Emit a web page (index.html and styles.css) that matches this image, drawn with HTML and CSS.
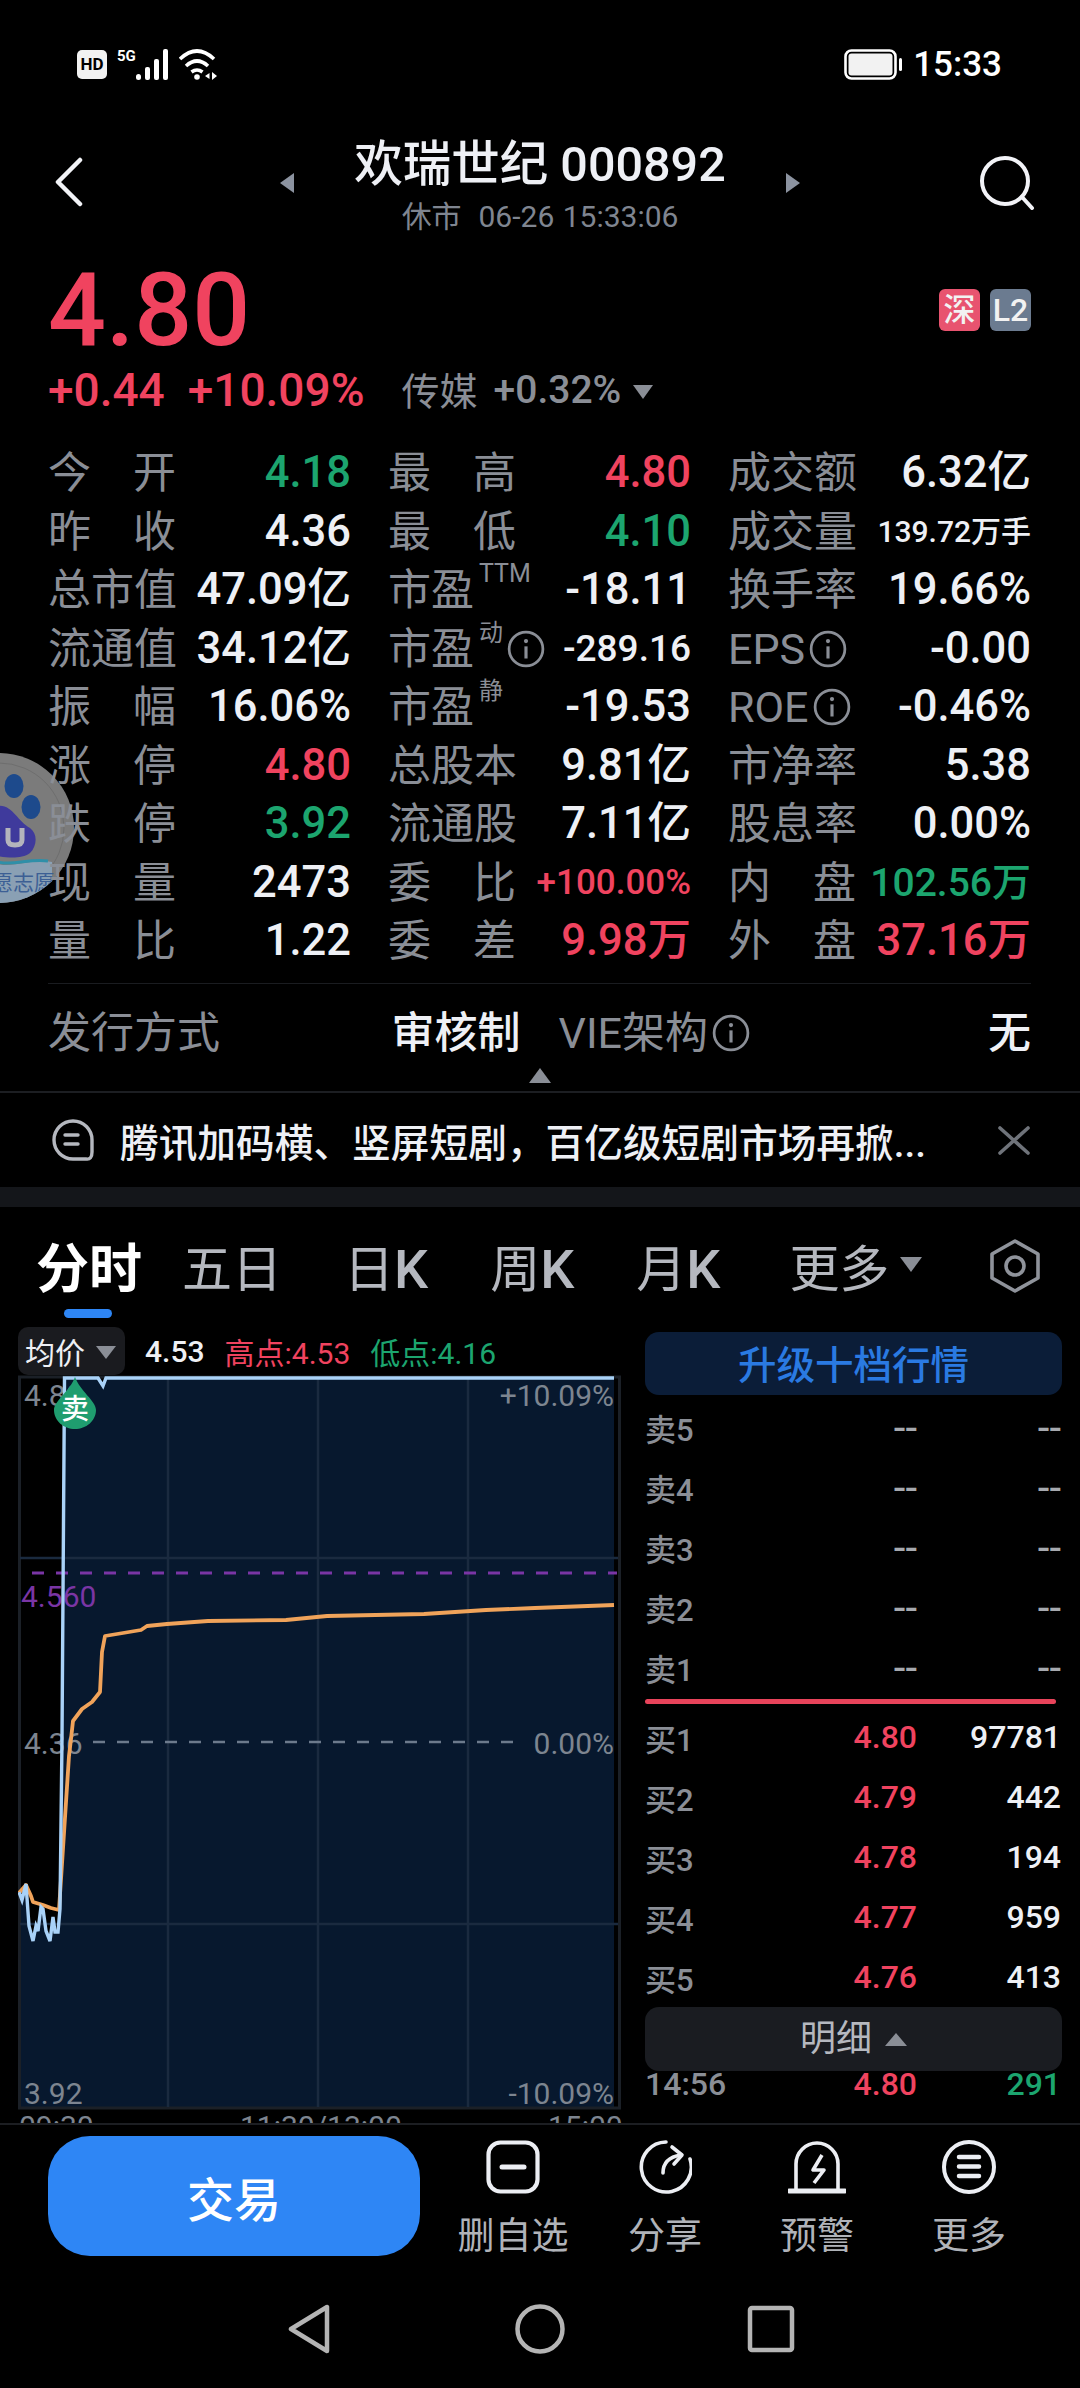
FILE: index.html
```html
<!DOCTYPE html>
<html lang="zh-CN">
<head>
  <meta charset="UTF-8" />
  <meta name="viewport" content="width=device-width, initial-scale=1.0" />
  <title>欢瑞世纪 000892</title>
  <link rel="stylesheet" href="styles.css">
</head>
<body>
  <svg class="defs" width="0" height="0">
    <symbol id="icon-info" viewBox="0 0 36 36">
      <circle cx="18" cy="18" r="16" fill="none" stroke="currentColor" stroke-width="2.6"/>
      <circle cx="18" cy="10.5" r="2" fill="currentColor"/>
      <path d="M18 15.5V27" stroke="currentColor" stroke-width="3" fill="none"/>
    </symbol>
  </svg>

  <!-- Floating helper bubble docked on the left edge -->
  <svg class="bubble" width="76" height="152" viewBox="0 0 76 152">
    <clipPath id="bubble-clip"><circle cx="-1" cy="76" r="75"/></clipPath>
    <circle cx="-1" cy="76" r="75" fill="#7b7b7b"/>
    <circle cx="-1" cy="76" r="65" fill="none" stroke="#6e6e6e" stroke-width="1"/>
    <g clip-path="url(#bubble-clip)">
      <ellipse cx="14" cy="34" rx="9.500" ry="12" fill="#1d4a8c"/>
      <ellipse cx="31" cy="55" rx="9.500" ry="12" fill="#1d4a8c"/>
      <path d="M-2 54C12 52 18 70 30 76C38 82 37 94 30 101C22 107 8 106 -2 104Z" fill="#3f3a9c"/>
      <path d="M8 76V88Q8 93 15 93Q22 93 22 88V76" fill="none" stroke="#b4b4bc" stroke-width="5"/>
      <path d="M-2 112C14 116 34 106 52 110V152H-2Z" fill="#8aa0b4"/>
      <path d="M-2 110C14 114 30 106 48 109" fill="none" stroke="#2f8fa8" stroke-width="3"/>
      <text class="bubble-text" x="-8" y="138">愿志愿</text>
    </g>
  </svg>

  <div class="status-bar">
    <div class="status-left">
      <span class="hd-badge">HD</span>
      <span class="net-label">5G</span>
      <svg class="signal" width="33" height="31" viewBox="0 0 33 31" fill="#fff">
        <rect x="0" y="25" width="5" height="6" rx="2.500"/>
        <rect x="9" y="18" width="5" height="13" rx="2"/>
        <rect x="18" y="10" width="5" height="21" rx="2"/>
        <rect x="27" y="0" width="5" height="31" rx="2"/>
      </svg>
      <svg class="wifi" width="38" height="31" viewBox="0 0 38 31" fill="none" stroke="#fff" stroke-width="3.600">
        <path d="M1 10Q18 -6 35 10"/>
        <path d="M7 17Q18 7 29 17"/>
        <path d="M12.500 23Q18 19 23.500 23"/>
        <circle cx="18" cy="28" r="2.800" fill="#fff" stroke="none"/>
        <path d="M30.500 24L26 27L30.500 30ZM33 23V31L38 27Z" fill="#fff" stroke="none"/>
      </svg>
    </div>
    <div class="status-right">
      <svg width="58" height="31" viewBox="0 0 58 31">
        <rect x="1.500" y="1.500" width="50" height="28" rx="6" fill="none" stroke="#fff" stroke-width="2.600"/>
        <rect x="4.500" y="4.500" width="44" height="22" rx="3" fill="#f2f2f2"/>
        <rect x="55" y="9" width="3" height="13" rx="1.500" fill="#fff"/>
      </svg>
      <span class="clock">15:33</span>
    </div>
  </div>

  <header class="nav-head">
    <svg class="back-icon" width="28" height="50" viewBox="0 0 28 50" fill="none" stroke="#f2f3f7" stroke-width="4.500" stroke-linecap="round" stroke-linejoin="round">
      <path d="M25 3L3 25L25 47"/>
    </svg>
    <div class="nav-center">
      <span class="tri tri-left"></span>
      <div class="nav-title">
        <h1>欢瑞世纪 000892</h1>
        <p>休市&nbsp; 06-26 15:33:06</p>
      </div>
      <span class="tri tri-right"></span>
    </div>
    <svg class="search-icon" width="56" height="54" viewBox="0 0 56 54" fill="none" stroke="#f2f3f7" stroke-width="4">
      <circle cx="26" cy="25" r="23"/>
      <path d="M43 41L53 52" stroke-linecap="round"/>
    </svg>
  </header>

  <section class="quote">
    <div class="quote-top">
      <div class="price">4.80</div>
      <div class="tags">
        <span class="tag tag-market">深</span>
        <span class="tag tag-level">L2</span>
      </div>
    </div>
    <div class="quote-change">
      <span class="up">+0.44</span>
      <span class="up">+10.09%</span>
      <span class="sector">传媒</span>
      <span class="sector-num">+0.32%</span>
      <span class="caret-down"></span>
    </div>
  </section>

  <section class="stats">
    <div class="stat"><span class="stat-label">今开</span><span class="stat-value down">4.18</span></div>
    <div class="stat"><span class="stat-label">最高</span><span class="stat-value up">4.80</span></div>
    <div class="stat"><span class="stat-label">成交额</span><span class="stat-value">6.32亿</span></div>

    <div class="stat"><span class="stat-label">昨收</span><span class="stat-value">4.36</span></div>
    <div class="stat"><span class="stat-label">最低</span><span class="stat-value down">4.10</span></div>
    <div class="stat"><span class="stat-label">成交量</span><span class="stat-value size-vol">139.72万手</span></div>

    <div class="stat"><span class="stat-label">总市值</span><span class="stat-value">47.09亿</span></div>
    <div class="stat"><span class="stat-label-flex">市盈<sup class="stat-sup sup-ttm">TTM</sup></span><span class="stat-value">-18.11</span></div>
    <div class="stat"><span class="stat-label">换手率</span><span class="stat-value">19.66%</span></div>

    <div class="stat"><span class="stat-label">流通值</span><span class="stat-value">34.12亿</span></div>
    <div class="stat"><span class="stat-label-flex">市盈<sup class="stat-sup">动</sup><svg class="info"><use href="#icon-info"/></svg></span><span class="stat-value size-pe">-289.16</span></div>
    <div class="stat"><span class="stat-label-flex">EPS<svg class="info"><use href="#icon-info"/></svg></span><span class="stat-value">-0.00</span></div>

    <div class="stat"><span class="stat-label">振幅</span><span class="stat-value">16.06%</span></div>
    <div class="stat"><span class="stat-label-flex">市盈<sup class="stat-sup">静</sup></span><span class="stat-value">-19.53</span></div>
    <div class="stat"><span class="stat-label-flex">ROE<svg class="info"><use href="#icon-info"/></svg></span><span class="stat-value">-0.46%</span></div>

    <div class="stat"><span class="stat-label">涨停</span><span class="stat-value up">4.80</span></div>
    <div class="stat"><span class="stat-label">总股本</span><span class="stat-value">9.81亿</span></div>
    <div class="stat"><span class="stat-label">市净率</span><span class="stat-value">5.38</span></div>

    <div class="stat"><span class="stat-label">跌停</span><span class="stat-value down">3.92</span></div>
    <div class="stat"><span class="stat-label">流通股</span><span class="stat-value">7.11亿</span></div>
    <div class="stat"><span class="stat-label">股息率</span><span class="stat-value">0.00%</span></div>

    <div class="stat"><span class="stat-label">现量</span><span class="stat-value">2473</span></div>
    <div class="stat"><span class="stat-label">委比</span><span class="stat-value up size-ratio">+100.00%</span></div>
    <div class="stat"><span class="stat-label">内盘</span><span class="stat-value down size-inner">102.56万</span></div>

    <div class="stat"><span class="stat-label">量比</span><span class="stat-value">1.22</span></div>
    <div class="stat"><span class="stat-label">委差</span><span class="stat-value up">9.98万</span></div>
    <div class="stat"><span class="stat-label">外盘</span><span class="stat-value up">37.16万</span></div>
  </section>

  <section class="issue">
    <div class="issue-row">
      <div class="issue-cell"><span class="issue-label">发行方式</span><span class="issue-value">审核制</span></div>
      <div class="issue-cell"><span class="issue-label">VIE架构<svg class="info"><use href="#icon-info"/></svg></span><span class="issue-value">无</span></div>
    </div>
    <span class="caret-up"></span>
  </section>

  <div class="news">
    <svg width="42" height="43" viewBox="0 0 42 43" fill="none" stroke="#b5b8bf" stroke-width="3.400" stroke-linecap="round">
      <path d="M21 40A19 19 0 1 1 40 21V33Q40 41 34 40Z"/>
      <path d="M13 16H26M13 25H26"/>
    </svg>
    <p class="news-text">腾讯加码横、竖屏短剧，百亿级短剧市场再掀...</p>
    <svg width="32" height="29" viewBox="0 0 32 29" fill="none" stroke="#6f737a" stroke-width="3.600" stroke-linecap="round">
      <path d="M2 2L30 27M30 2L2 27"/>
    </svg>
  </div>

  <div class="band"></div>

  <nav class="tabs">
    <span class="tab active">分时</span>
    <span class="tab">五日</span>
    <span class="tab">日<b class="tab-k">K</b></span>
    <span class="tab">周<b class="tab-k">K</b></span>
    <span class="tab">月<b class="tab-k">K</b></span>
    <span class="tab tab-more">更多<i class="tab-caret"></i></span>
    <svg class="tab-gear" width="50" height="54" viewBox="0 0 50 54" fill="none" stroke="#8f939b" stroke-width="3.600" stroke-linejoin="round">
      <path d="M25 2L48 15V39L25 52L2 39V15Z"/>
      <circle cx="25" cy="27" r="9"/>
    </svg>
  </nav>

  <section class="market">
    <div class="chart-col">
      <div class="chart-bar">
        <div class="avg-select">均价<i class="avg-caret"></i></div>
        <span class="avg-num">4.53</span>
        <span class="up">高点:4.53</span>
        <span class="down">低点:4.16</span>
      </div>
      <!-- Intraday chart, drawn on a free canvas of 612 x 748 -->
      <svg class="chart" width="612" height="748" viewBox="18 1376 612 748">
        <path class="area" d="M19 1893L22 1901L26 1885L29 1927L33 1942L36 1927L38 1932L41 1908L43 1910L46 1932L50 1942L53 1918L55 1933L58 1933L60 1910L62 1740L64.500 1379L98 1379L103 1387L106 1379L614 1379V2108H19Z"/>
        <rect class="frame" x="19.500" y="1378" width="600" height="731"/>
        <path class="grid" d="M168 1379V2108M318 1379V2108M468 1379V2108M20 1559H618M20 1925H618"/>
        <path class="zero-line" d="M93 1743H525"/>
        <path class="limit-line" d="M32 1574H617"/>
        <text class="axis-text" x="24" y="1407">4.80</text>
        <text class="axis-text" x="24" y="1755">4.36</text>
        <text class="axis-text" x="24" y="2105">3.92</text>
        <text class="axis-text axis-end" x="614" y="1407">+10.09%</text>
        <text class="axis-text axis-end" x="614" y="1755">0.00%</text>
        <text class="axis-text axis-end" x="614" y="2105">-10.09%</text>
        <text class="limit-text" x="21" y="1608">4.560</text>
        <path class="avg-line" d="M19 1894L26 1886L31 1897L33 1903L43 1906L51 1909L59 1911L69 1757L71 1740L73 1722L82 1710L92 1703L100 1693L102 1653L105 1637L141 1631L147 1627L167 1625L208 1622L286 1621L327 1617L424 1615L486 1611L535 1609L614 1606"/>
        <path class="price-line" d="M19 1893L22 1901L26 1885L29 1927L33 1942L36 1927L38 1932L41 1908L43 1910L46 1932L50 1942L53 1918L55 1933L58 1933L60 1910L62 1740L64.500 1379L98 1379L103 1387L106 1379L614 1379"/>
        <path class="sell-mark" d="M75 1378C80 1392 96 1402 96 1411C96 1422 86 1430 75 1430C64 1430 54 1422 54 1411C54 1402 70 1392 75 1378Z"/>
        <text class="sell-text" x="75" y="1420">卖</text>
        <text class="time-text" x="19" y="2138">09:30</text>
        <text class="time-text" x="240" y="2138">11:30/13:00</text>
        <text class="time-text" x="548" y="2138">15:00</text>
      </svg>
    </div>

    <div class="depth-col">
      <div class="upgrade">升级十档行情</div>
      <div class="depth-list">
        <div class="depth-row"><span class="depth-label">卖5</span><span class="depth-dash">--</span><span class="depth-dash">--</span></div>
        <div class="depth-row"><span class="depth-label">卖4</span><span class="depth-dash">--</span><span class="depth-dash">--</span></div>
        <div class="depth-row"><span class="depth-label">卖3</span><span class="depth-dash">--</span><span class="depth-dash">--</span></div>
        <div class="depth-row"><span class="depth-label">卖2</span><span class="depth-dash">--</span><span class="depth-dash">--</span></div>
        <div class="depth-row"><span class="depth-label">卖1</span><span class="depth-dash">--</span><span class="depth-dash">--</span></div>
      </div>
      <div class="depth-split"></div>
      <div class="depth-list">
        <div class="depth-row"><span class="depth-label">买1</span><span class="up">4.80</span><span>97781</span></div>
        <div class="depth-row"><span class="depth-label">买2</span><span class="up">4.79</span><span>442</span></div>
        <div class="depth-row"><span class="depth-label">买3</span><span class="up">4.78</span><span>194</span></div>
        <div class="depth-row"><span class="depth-label">买4</span><span class="up">4.77</span><span>959</span></div>
        <div class="depth-row"><span class="depth-label">买5</span><span class="up">4.76</span><span>413</span></div>
      </div>
      <div class="detail-bar">明细<i class="detail-caret"></i></div>
      <div class="depth-row trade-row"><span class="depth-label">14:56</span><span class="up">4.80</span><span class="down">291</span></div>
    </div>
  </section>

  <footer class="action-bar">
    <button class="trade-btn">交易</button>
    <div class="action">
      <svg width="54" height="54" viewBox="0 0 54 54" fill="none" stroke="#eceef3" stroke-width="4.200" stroke-linecap="round">
        <rect x="2.500" y="2.500" width="49" height="49" rx="12"/>
        <path d="M16 27H38" stroke-width="5"/>
      </svg>
      <span>删自选</span>
    </div>
    <div class="action">
      <svg width="54" height="54" viewBox="0 0 54 54" fill="none" stroke="#eceef3" stroke-width="3.600" stroke-linecap="round" stroke-linejoin="round">
        <path d="M28 2A25 25 0 1 0 52 19"/>
        <path d="M25 33C25 24 30 17 43 15"/>
        <path d="M34 7L44 15L36 24"/>
      </svg>
      <span>分享</span>
    </div>
    <div class="action">
      <svg width="58" height="54" viewBox="0 0 58 54" fill="none" stroke="#eceef3" stroke-width="3.600" stroke-linejoin="round">
        <path d="M8 50V24A21 21 0 0 1 50 24V50"/>
        <path d="M1 51H57" stroke-width="5" stroke-linecap="round"/>
        <path d="M34 15L25 30H36L26 43"/>
      </svg>
      <span>预警</span>
    </div>
    <div class="action">
      <svg width="54" height="54" viewBox="0 0 54 54" fill="none" stroke="#eceef3" stroke-width="4" stroke-linecap="round">
        <circle cx="27" cy="27" r="25"/>
        <path d="M17 17H37M17 26.500H37M17 36H37" stroke-width="4.500"/>
      </svg>
      <span>更多</span>
    </div>
  </footer>

  <div class="sys-nav">
    <svg width="48" height="50" viewBox="0 0 48 50" fill="none" stroke="#b4b4b4" stroke-width="4.500" stroke-linejoin="round">
      <path d="M42 3V47L6 25Z"/>
    </svg>
    <svg width="50" height="50" viewBox="0 0 50 50" fill="none" stroke="#b4b4b4" stroke-width="4.500">
      <circle cx="25" cy="25" r="22.500"/>
    </svg>
    <svg width="48" height="50" viewBox="0 0 48 50" fill="none" stroke="#b4b4b4" stroke-width="4.500" stroke-linejoin="round">
      <rect x="3" y="4" width="42" height="42" rx="2"/>
    </svg>
  </div>
</body>
</html>
```

FILE: styles.css
```css
body, h1, p, button {
  margin: 0;
  padding: 0;
}

body {
  position: relative;
  width: 1080px;
  height: 2388px;
  overflow: hidden;
  background-color: #000;
  color: #eef0f5;
  font-family: Roboto, "Noto Sans CJK SC", sans-serif;
}

i {
  display: block;
}

.defs {
  position: absolute;
}

.up {
  color: #f0435f;
}

.down {
  color: #1ca56f;
}

/* floating bubble, sits behind the stats text */
.bubble {
  position: absolute;
  left: 0;
  top: 752px;
}

.bubble-text {
  font-size: 21px;
  fill: #3c5f94;
}

/* status bar */
.status-bar {
  display: flex;
  justify-content: space-between;
  height: 130px;
  padding: 49px 78px 0 77px;
  box-sizing: border-box;
}

.status-left {
  display: flex;
  align-items: flex-start;
}

.hd-badge {
  width: 30px;
  height: 29px;
  margin-top: 1px;
  border-radius: 5px;
  background-color: #f2f2f2;
  color: #000;
  font-size: 17px;
  font-weight: 700;
  line-height: 29px;
  text-align: center;
}

.net-label {
  margin-left: 10px;
  font-size: 15px;
  font-weight: 700;
  line-height: 14px;
  color: #fff;
}

.wifi {
  margin-left: 10px;
}

.status-right {
  display: flex;
  align-items: center;
  gap: 11px;
  height: 31px;
}

.clock {
  font-size: 35px;
  font-weight: 500;
  line-height: 31px;
  color: #fff;
}

/* title header */
.nav-head {
  display: grid;
  grid-template-columns: 1fr auto 1fr;
  height: 132px;
  padding: 0 45px;
  box-sizing: border-box;
}

.back-icon {
  margin: 27px 0 0 10px;
}

.search-icon {
  justify-self: end;
  margin-top: 26px;
}

.nav-center {
  display: flex;
  gap: 61px;
}

.nav-title {
  width: 370px;
  padding-top: 9px;
  text-align: center;
}

.nav-title h1 {
  font-size: 48.500px;
  font-weight: 500;
  line-height: 52px;
  white-space: nowrap;
  margin: 0 -5px;
}

.nav-title p {
  margin-top: 6px;
  font-size: 30px;
  line-height: 40px;
  word-spacing: 1px;
  color: #7f8590;
  white-space: nowrap;
}

.tri {
  width: 0;
  height: 0;
  margin-top: 43px;
  border-top: 10px solid transparent;
  border-bottom: 10px solid transparent;
}

.tri-left {
  border-right: 14px solid #8c93a0;
}

.tri-right {
  border-left: 14px solid #8c93a0;
}

/* last price */
.quote {
  height: 181px;
  padding: 0 49px 0 48px;
}

.quote-top {
  display: flex;
  justify-content: space-between;
  align-items: center;
  height: 96px;
}

.price {
  font-size: 102px;
  font-weight: 500;
  line-height: 96px;
  color: #f0435f;
}

.tags {
  display: flex;
  gap: 10px;
}

.tag {
  width: 41px;
  height: 42px;
  border-radius: 6px;
  color: #f2f2f2;
  font-size: 32px;
  font-weight: 500;
  line-height: 42px;
  text-align: center;
}

.tag-market {
  background-color: #e8536f;
}

.tag-level {
  background-color: #6b7b90;
}

.quote-change {
  display: flex;
  align-items: center;
  height: 50px;
  margin-top: 7px;
  font-size: 46px;
  font-weight: 500;
}

.quote-change .up + .up {
  margin-left: 23px;
}

.sector {
  margin: -4px 0 0 37px;
  font-size: 38px;
  font-weight: 400;
  color: #8a8e96;
}

.sector-num {
  margin-left: 16px;
  font-size: 39px;
  font-weight: 500;
  color: #8a8e96;
}

.caret-down {
  width: 0;
  height: 0;
  margin: 3px 0 0 12px;
  border-left: 10px solid transparent;
  border-right: 10px solid transparent;
  border-top: 14px solid #8a8e96;
}

/* 9 x 3 stats table */
.stats {
  position: relative;
  display: grid;
  grid-template-columns: repeat(3, 1fr);
  grid-auto-rows: 58.5px;
  column-gap: 37px;
  padding: 1px 49px 0 48px;
  height: 540px;
  box-sizing: border-box;
}

.stat {
  display: flex;
  justify-content: space-between;
  align-items: center;
  line-height: 58px;
  white-space: nowrap;
}

.stat-label {
  display: block;
  width: 128px;
  font-size: 43px;
  color: #8a8e96;
  text-align: justify;
  text-align-last: justify;
}

.stat-label-flex {
  display: flex;
  align-items: center;
  align-self: stretch;
  font-size: 43px;
  color: #8a8e96;
}

.stat-sup {
  align-self: flex-start;
  margin-left: 5px;
  font-size: 24px;
  line-height: 26px;
}

.sup-ttm {
  font-size: 25px;
}

.info {
  width: 38px;
  height: 38px;
  margin-left: 4px;
  color: #8a8e96;
}

.stat-value {
  font-size: 43.500px;
  font-weight: 500;
}

.stat-value.size-vol {
  font-size: 30px;
}

.stat-value.size-pe {
  font-size: 37px;
}

.stat-value.size-ratio {
  font-size: 35px;
}

.stat-value.size-inner {
  font-size: 39px;
}

/* listing row */
.issue {
  display: flex;
  flex-direction: column;
  height: 110px;
  box-sizing: border-box;
  border-bottom: 2px solid #1c1e22;
}

.issue-row {
  display: grid;
  grid-template-columns: 1fr 1fr;
  column-gap: 38px;
  margin: 0 49px 0 48px;
  padding-top: 25px;
  border-top: 1px solid #1a1c20;
  font-size: 43px;
  line-height: 48px;
}

.issue-cell {
  display: flex;
  justify-content: space-between;
}

.issue-label {
  display: flex;
  align-items: center;
  color: #8a8e96;
}

.issue-value {
  font-weight: 500;
}

.caret-up {
  align-self: center;
  width: 0;
  height: 0;
  margin-top: 11px;
  border-left: 11px solid transparent;
  border-right: 11px solid transparent;
  border-bottom: 15px solid #8a8e96;
}

/* news ticker */
.news {
  display: flex;
  align-items: center;
  height: 94px;
  padding: 0 50px 0 52px;
  box-sizing: border-box;
}

.news-text {
  flex: 1;
  margin-left: 26px;
  font-size: 38.700px;
  font-weight: 500;
  white-space: nowrap;
}

.band {
  height: 20px;
  background-color: #14161a;
}

/* chart period tabs */
.tabs {
  display: flex;
  align-items: flex-start;
  gap: 62px;
  height: 120px;
  padding: 33px 40px 0 36px;
  box-sizing: border-box;
}

.tab {
  display: flex;
  flex: none;
  font-size: 50px;
  line-height: 60px;
  color: #b5b8bf;
  white-space: nowrap;
}

.tab-k {
  font-size: 54px;
  font-weight: 500;
}

.tab.active {
  position: relative;
  margin-right: -22px;
  font-size: 53px;
  font-weight: 700;
  color: #fff;
}

.tab.active::after {
  content: "";
  position: absolute;
  left: 28px;
  top: 69px;
  width: 48px;
  height: 9px;
  border-radius: 5px;
  background-color: #2e86f5;
}

.tab-more {
  margin-left: 7px;
}

.tab-caret {
  width: 0;
  height: 0;
  margin: 17px 0 0 11px;
  border-left: 11px solid transparent;
  border-right: 11px solid transparent;
  border-top: 15px solid #8a8e96;
}

.tab-gear {
  flex: none;
  margin: -1px 0 0 auto;
}

/* chart + order book */
.market {
  display: flex;
  height: 796px;
  padding-left: 18px;
}

.chart-col {
  width: 612px;
}

.chart-bar {
  display: flex;
  align-items: center;
  gap: 20px;
  height: 48px;
  font-size: 30px;
  font-weight: 400;
}

.avg-select {
  display: flex;
  align-items: center;
  width: 107px;
  height: 48px;
  padding-left: 7px;
  box-sizing: border-box;
  border-radius: 10px;
  background-color: #1a1b1f;
}

.avg-caret {
  width: 0;
  height: 0;
  margin: 2px 0 0 11px;
  border-left: 10px solid transparent;
  border-right: 10px solid transparent;
  border-top: 13px solid #8a8e96;
}

.avg-num {
  font-weight: 500;
}

.chart {
  display: block;
}

.area {
  fill: #07182e;
}

.frame {
  fill: none;
  stroke: #1b2027;
  stroke-width: 3;
}

.grid {
  fill: none;
  stroke: #1a2a3f;
  stroke-width: 2.500;
}

.zero-line {
  fill: none;
  stroke: #6c7a8c;
  stroke-width: 2.500;
  stroke-dasharray: 12 12;
}

.limit-line {
  fill: none;
  stroke: #7a35a5;
  stroke-width: 3;
  stroke-dasharray: 12 12;
}

.avg-line {
  fill: none;
  stroke: #f0a35a;
  stroke-width: 3.800;
  stroke-linejoin: round;
}

.price-line {
  fill: none;
  stroke: #a9d2f8;
  stroke-width: 3.400;
}

.axis-text {
  font-size: 30px;
  fill: #7d8590;
}

.axis-end {
  text-anchor: end;
}

.limit-text {
  font-size: 30px;
  fill: #7a35a5;
}

.sell-mark {
  fill: #1f9d6f;
}

.sell-text {
  font-size: 28px;
  font-weight: 500;
  fill: #fff;
  text-anchor: middle;
}

.time-text {
  font-size: 30px;
  fill: #7d8590;
}

.depth-col {
  width: 417px;
  margin-left: 15px;
  padding-top: 5px;
  box-sizing: border-box;
}

.upgrade {
  height: 63px;
  margin-bottom: 2px;
  border-radius: 14px;
  background-color: #0b1d38;
  color: #2a7ae2;
  font-size: 38.500px;
  font-weight: 500;
  line-height: 67px;
  text-align: center;
}

.depth-row {
  display: grid;
  grid-template-columns: 1fr auto 144px;
  align-items: center;
  height: 60px;
  padding-right: 1px;
  font-size: 32px;
  font-weight: 500;
  text-align: right;
}

.depth-label {
  font-size: 31px;
  font-weight: 500;
  color: #8a8e96;
  text-align: left;
}

.depth-dash {
  font-size: 42px;
  font-weight: 400;
  color: #a6a9af;
}

.depth-split {
  height: 5px;
  width: 411px;
  margin: 2px 0 3px;
  border-radius: 3px;
  background-color: #e8435a;
}

.detail-bar {
  display: flex;
  justify-content: center;
  align-items: center;
  height: 64px;
  border-radius: 14px;
  background-color: #1a1c21;
  color: #b5b8bf;
  font-size: 36px;
  line-height: 68px;
}

.detail-caret {
  width: 0;
  height: 0;
  margin-left: 13px;
  border-left: 11px solid transparent;
  border-right: 11px solid transparent;
  border-bottom: 13px solid #8a8e96;
}

.trade-row {
  height: 26px;
  line-height: 26px;
}

.trade-row .depth-label {
  font-size: 32px;
}

/* bottom actions */
.action-bar {
  display: flex;
  height: 156px;
  padding-left: 48px;
  box-sizing: border-box;
  border-top: 2px solid #1c1e22;
}

.trade-btn {
  width: 372px;
  height: 120px;
  margin: 11px 17px 0 0;
  border: none;
  border-radius: 42px;
  background-color: #2e86f5;
  color: #fff;
  font-family: inherit;
  font-size: 47px;
  font-weight: 500;
}

.action {
  display: flex;
  flex-direction: column;
  align-items: center;
  width: 152px;
  padding-top: 15px;
  color: #b0b3b9;
  font-size: 37px;
  line-height: 40px;
}

.action svg {
  margin-bottom: 23px;
}

/* system navigation */
.sys-nav {
  display: flex;
  justify-content: center;
  align-items: center;
  gap: 182px;
  padding-top: 25px;
}
```
